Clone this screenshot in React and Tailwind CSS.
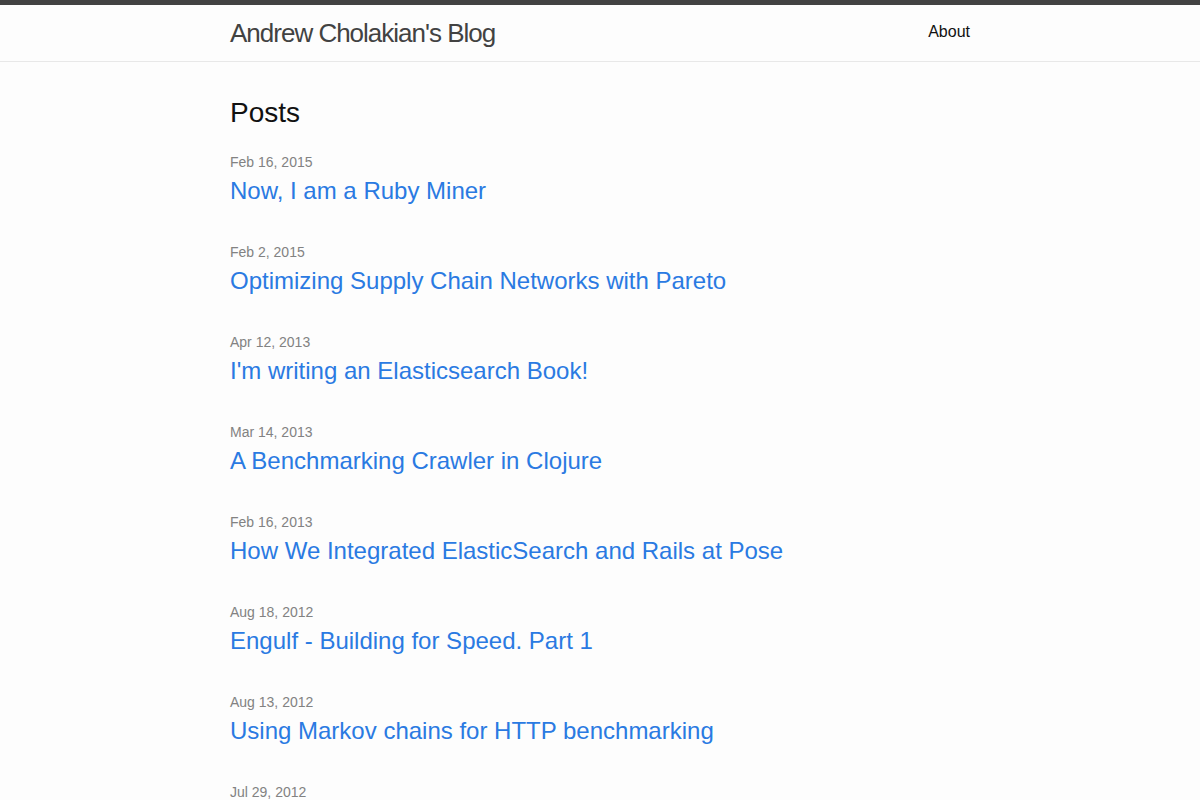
const posts = [
  { date: "Feb 16, 2015", title: "Now, I am a Ruby Miner" },
  { date: "Feb 2, 2015", title: "Optimizing Supply Chain Networks with Pareto" },
  { date: "Apr 12, 2013", title: "I'm writing an Elasticsearch Book!" },
  { date: "Mar 14, 2013", title: "A Benchmarking Crawler in Clojure" },
  { date: "Feb 16, 2013", title: "How We Integrated ElasticSearch and Rails at Pose" },
  { date: "Aug 18, 2012", title: "Engulf - Building for Speed. Part 1" },
  { date: "Aug 13, 2012", title: "Using Markov chains for HTTP benchmarking" },
  { date: "Jul 29, 2012", title: "Engulf 3.0 Beta" },
];

export default function App() {
  return (
    <div className="min-h-screen bg-[#fdfdfd] text-[#111] font-['Liberation_Sans',Arial,sans-serif] text-base leading-[1.5]">
      {/* Site header */}
      <header className="border-t-[5px] border-t-[#424242] border-b border-b-[#e8e8e8] min-h-[56px]">
        <div className="max-w-[800px] mx-auto px-[30px] flex justify-between items-center">
          <a href="#" className="text-[26px] leading-[56px] tracking-[-1px] text-[#424242]">
            Andrew Cholakian's Blog
          </a>
          <nav className="-mt-[2px]">
            <a href="#" className="leading-[56px] text-[#111]">About</a>
          </nav>
        </div>
      </header>

      {/* Post list */}
      <main className="py-[30px]">
        <div className="max-w-[800px] mx-auto px-[30px]">
          <h1 className="text-[28px] leading-[1.5] mb-[16px]">Posts</h1>
          <ul>
            {posts.map((p) => (
              <li key={p.date + p.title} className="pt-[2px] pb-[31px]">
                <span className="block text-sm leading-[21px] text-[#828282]">{p.date}</span>
                <h3 className="text-2xl leading-[36px]">
                  <a href="#" className="text-[#2a7ae2]">{p.title}</a>
                </h3>
              </li>
            ))}
          </ul>
        </div>
      </main>
    </div>
  );
}
